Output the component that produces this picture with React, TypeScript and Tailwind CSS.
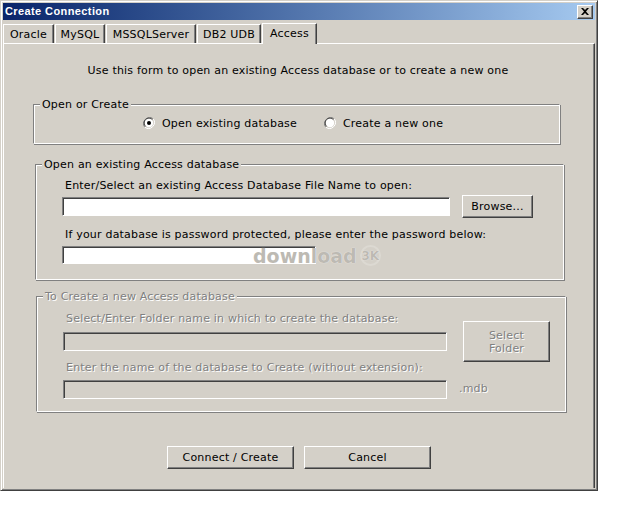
import React from "react";

const font = "font-['DejaVu_Sans',Verdana,sans-serif] text-[11px] leading-[13px] tracking-[0.2px]";

function Btn({ className = "", children }: { className?: string; children: React.ReactNode }) {
  return (
    <div
      className={`flex items-center justify-center border border-t-white border-l-white border-r-[#404040] border-b-[#404040] bg-[#d4d0c8] shadow-[inset_-1px_-1px_0_#808080] ${className}`}
    >
      {children}
    </div>
  );
}

function Field({ className = "", disabled = false }: { className?: string; disabled?: boolean }) {
  return (
    <div
      className={`border border-t-[#808080] border-l-[#808080] border-r-white border-b-white shadow-[inset_1px_1px_0_#404040] ${
        disabled ? "bg-[#d4d0c8]" : "bg-white"
      } ${className}`}
    />
  );
}

function Group({
  title,
  disabled = false,
  className = "",
  children,
}: {
  title: string;
  disabled?: boolean;
  className?: string;
  children: React.ReactNode;
}) {
  return (
    <div
      className={`relative border border-t-[#808080] border-l-[#808080] border-r-white border-b-white shadow-[inset_1px_1px_0_#fff,1px_1px_0_#808080] ${className}`}
    >
      <span
        className={`absolute -top-[7px] left-[6px] bg-[#d4d0c8] px-[2px] ${
          disabled ? "text-[#808080] [text-shadow:1px_1px_0_#fff]" : "text-black"
        }`}
      >
        {title}
      </span>
      {children}
    </div>
  );
}

function Radio({ checked, label, className = "" }: { checked: boolean; label: string; className?: string }) {
  return (
    <div className={`flex items-center ${className}`}>
      <svg width="12" height="12" viewBox="0 0 12 12" className="shrink-0">
        <path d="M10.2 1.8A6 6 0 0 0 1.8 10.2" fill="none" stroke="#808080" strokeWidth="1" />
        <path d="M9.4 2.6A4.8 4.8 0 0 0 2.6 9.4" fill="none" stroke="#404040" strokeWidth="1" />
        <circle cx="6" cy="6" r="4.2" fill="#fff" />
        <path d="M1.8 10.2A6 6 0 0 0 10.2 1.8" fill="none" stroke="#fff" strokeWidth="1" />
        {checked && <circle cx="6" cy="6" r="2" fill="#000" />}
      </svg>
      <span className="ml-[7px]">{label}</span>
    </div>
  );
}

const dis = "text-[#808080] [text-shadow:1px_1px_0_#fff]";

export default function App() {
  const tabs = ["Oracle", "MySQL", "MSSQLServer", "DB2 UDB"];
  const tabW = ["w-[51px]", "w-[50px]", "w-[90px]", "w-[64px]"];
  return (
    <div className={`w-[640px] h-[512px] bg-white text-black ${font}`}>
      <div className="relative flex flex-col w-[598px] h-[491px] border border-t-[#d4d0c8] border-l-[#d4d0c8] border-r-[#404040] border-b-[#404040] shadow-[inset_1px_1px_0_#fff,inset_-1px_-1px_0_#808080] bg-[#d4d0c8] p-[2px]">
        {/* title bar */}
        <div className="flex items-center h-[17px] bg-gradient-to-r from-[#0a246a] to-[#a6caf0] pl-[2px] pr-[2px]">
          <span className="font-['Liberation_Sans',Arial,sans-serif] font-bold text-[11px] tracking-[0.4px] text-white">
            Create Connection
          </span>
          <Btn className="ml-auto w-[16px] h-[14px]">
            <svg width="8" height="7" viewBox="0 0 8 7">
              <path d="M0 0h2l2 2 2-2h2L5 3.5 8 7H6L4 5 2 7H0l3-3.5z" fill="#000" />
            </svg>
          </Btn>
        </div>

        {/* tabs */}
        <div className="flex items-end h-[23px]">
          {tabs.map((t, i) => (
            <div
              key={t}
              className={`flex items-center justify-center h-[19px] ${tabW[i]} border-t border-l border-t-white border-l-white border-r border-r-[#404040] shadow-[inset_-1px_0_0_#808080] mr-[1px]`}
            >
              {t}
            </div>
          ))}
          <div className="relative -mb-[1px] z-10 flex items-center justify-center h-[21px] w-[55px] border-t border-l border-t-white border-l-white border-r border-r-[#404040] shadow-[inset_-1px_0_0_#808080] bg-[#d4d0c8] pb-[2px]">
            Access
          </div>
        </div>

        {/* tab page */}
        <div className="flex-1 flex flex-col border-t border-l border-t-white border-l-white border-r border-r-[#404040] shadow-[inset_-1px_0_0_#808080]">
          <div className="mt-[20px] text-center pr-[2px]">
            Use this form to open an existing Access database or to create a new one
          </div>

          <Group title="Open or Create" className="mt-[27px] ml-[29px] w-[527px] h-[40px]">
            <div className="flex items-center h-full -mt-[1px]">
              <Radio checked label="Open existing database" className="ml-[109px]" />
              <Radio checked={false} label="Create a new one" className="ml-[27px]" />
            </div>
          </Group>

          <Group title="Open an existing Access database" className="mt-[20px] ml-[31px] w-[529px] h-[116px]">
            <div className="flex flex-col pl-[26px] pt-[14px]">
              <div className="pl-[3px]">Enter/Select an existing Access Database File Name to open:</div>
              <div className="flex items-center mt-[3px]">
                <Field className="w-[388px] h-[19px]" />
                <Btn className="ml-[12px] w-[71px] h-[23px]">Browse...</Btn>
              </div>
              <div className="pl-[3px] mt-[10px]">
                If your database is password protected, please enter the password below:
              </div>
              <Field className="mt-[5px] w-[254px] h-[18px]" />
            </div>
            {/* watermark */}
            <div className="absolute left-[217px] top-[80px] flex items-center text-[#bdbab3] font-['DejaVu_Sans',sans-serif] font-bold text-[19px] leading-[20px] tracking-normal [text-shadow:0_0_1px_#fff]">
              download
              <span className="ml-[3px] flex items-center justify-center w-[21px] h-[21px] rounded-full border-2 border-[#dcd9d2] text-[12px] leading-[12px]">
                3K
              </span>
            </div>
          </Group>

          <Group title="To Create a new Access database" disabled className="mt-[16px] ml-[32px] w-[530px] h-[116px]">
            <div className="flex pl-[26px] pt-[15px]">
              <div className="flex flex-col w-[384px]">
                <div className={`pl-[3px] ${dis}`}>Select/Enter Folder name in which to create the database:</div>
                <Field disabled className="mt-[7px] w-[384px] h-[19px]" />
                <div className={`pl-[3px] mt-[10px] ${dis}`}>
                  Enter the name of the database to Create (without extension):
                </div>
                <Field disabled className="mt-[6px] w-[384px] h-[19px]" />
              </div>
              <div className="flex flex-col ml-[16px]">
                <Btn className="mt-[9px] w-[87px] h-[41px]">
                  <span className={`flex flex-col items-center ${dis}`}>
                    <span>Select</span>
                    <span>Folder</span>
                  </span>
                </Btn>
                <div className={`mt-[20px] -ml-[4px] ${dis}`}>.mdb</div>
              </div>
            </div>
          </Group>

          <div className="flex mt-[34px] ml-[163px]">
            <Btn className="w-[127px] h-[23px]">Connect / Create</Btn>
            <Btn className="ml-[10px] w-[127px] h-[23px]">Cancel</Btn>
          </div>
        </div>
      </div>
    </div>
  );
}
